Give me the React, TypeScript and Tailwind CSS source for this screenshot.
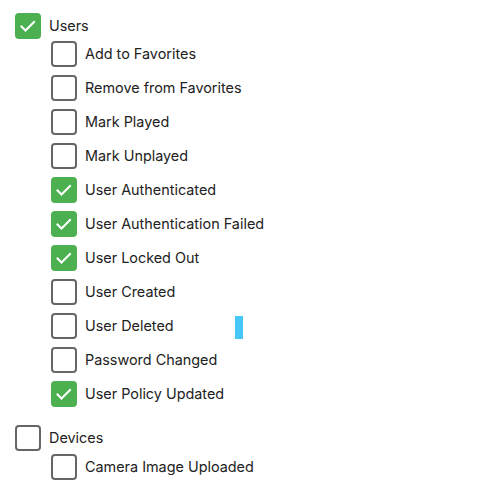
import React from "react";

type Item = { label: string; checked: boolean };

function Box({ checked }: { checked: boolean }) {
  if (checked) {
    return (
      <div className="w-[26px] h-[26px] shrink-0 rounded-[4px] bg-[#4caf50] flex items-center justify-center">
        <svg width="26" height="26" viewBox="0 0 26 26" fill="none">
          <polyline points="6.5,13.5 10.5,17.5 19,9" stroke="#ffffff" strokeWidth="2.1" strokeLinecap="square" strokeLinejoin="miter" />
        </svg>
      </div>
    );
  }
  return <div className="w-[26px] h-[26px] shrink-0 rounded-[4px] border-2 border-[#666666] bg-white" />;
}

function Row({ item }: { item: Item }) {
  return (
    <div className="flex items-center gap-[8px] h-[26px]">
      <Box checked={item.checked} />
      <span className="text-[14.4px] text-[#222222] leading-none">{item.label}</span>
    </div>
  );
}

const users: Item[] = [
  { label: "Add to Favorites", checked: false },
  { label: "Remove from Favorites", checked: false },
  { label: "Mark Played", checked: false },
  { label: "Mark Unplayed", checked: false },
  { label: "User Authenticated", checked: true },
  { label: "User Authentication Failed", checked: true },
  { label: "User Locked Out", checked: true },
  { label: "User Created", checked: false },
  { label: "User Deleted", checked: false },
  { label: "Password Changed", checked: false },
  { label: "User Policy Updated", checked: true },
];

export default function App() {
  return (
    <div
      className="relative w-[492px] h-[486px] bg-white overflow-hidden pl-[15px] pt-[13px]"
      style={{ fontFamily: "Inter, 'Noto Sans', sans-serif" }}
    >
      <div className="flex flex-col">
        <Row item={{ label: "Users", checked: true }} />
        <div className="ml-[36px] mt-[2px] flex flex-col gap-[8px]">
          {users.map((u) => (
            <Row key={u.label} item={u} />
          ))}
        </div>
        <div className="mt-[18px]">
          <Row item={{ label: "Devices", checked: false }} />
        </div>
        <div className="ml-[36px] mt-[3px] flex flex-col gap-[8px]">
          <Row item={{ label: "Camera Image Uploaded", checked: false }} />
        </div>
      </div>
      <div className="absolute left-[235px] top-[316px] w-[8px] h-[23px] bg-[#45c8f8]" />
    </div>
  );
}
